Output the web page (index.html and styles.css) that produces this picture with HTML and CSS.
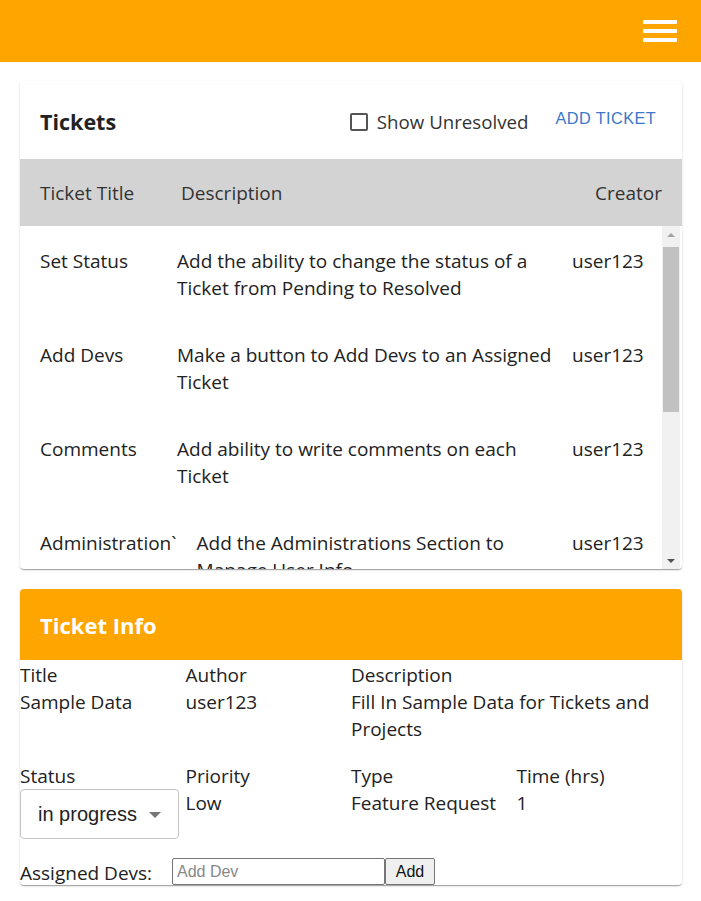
FILE: index.html
```html
<!DOCTYPE html>
<html>
<head>
<meta charset="utf-8">
<link rel="stylesheet" href="styles.css">
</head>
<body>
<header class="topbar">
  <div class="burger"><span></span><span></span><span></span></div>
</header>
<main class="page">
  <section class="card tickets">
    <div class="tickets-head">
      <h2 class="tickets-title">Tickets</h2>
      <label class="unresolved"><span class="box"></span>Show Unresolved</label>
      <button class="add-ticket">ADD TICKET</button>
    </div>
    <div class="thead">
      <div class="th-title">Ticket Title</div>
      <div class="th-desc">Description</div>
      <div class="th-creator">Creator</div>
    </div>
    <div class="tbody-wrap">
      <div class="tbody">
        <div class="row">
          <div class="c-title">Set Status</div>
          <div class="c-desc">Add the ability to change the status of a Ticket from Pending to Resolved</div>
          <div class="c-creator">user123</div>
        </div>
        <div class="row">
          <div class="c-title">Add Devs</div>
          <div class="c-desc">Make a button to Add Devs to an Assigned Ticket</div>
          <div class="c-creator">user123</div>
        </div>
        <div class="row">
          <div class="c-title">Comments</div>
          <div class="c-desc">Add ability to write comments on each Ticket</div>
          <div class="c-creator">user123</div>
        </div>
        <div class="row">
          <div class="c-title">Administration`</div>
          <div class="c-desc">Add the Administrations Section to Manage User Info</div>
          <div class="c-creator">user123</div>
        </div>
      </div>
      <div class="scrollbar">
        <div class="sb-btn"><span class="arr-up"></span></div>
        <div class="sb-track"><div class="sb-thumb"></div></div>
        <div class="sb-btn"><span class="arr-down"></span></div>
      </div>
    </div>
  </section>

  <section class="card info">
    <div class="info-head">Ticket Info</div>
    <div class="info-grid">
      <div class="cell"><div>Title</div><div>Sample Data</div></div>
      <div class="cell"><div>Author</div><div>user123</div></div>
      <div class="cell span2"><div>Description</div><div>Fill In Sample Data for Tickets and Projects</div></div>
      <div class="cell"><div>Status</div>
        <div class="select"><span>in progress</span><span class="caret"></span></div>
      </div>
      <div class="cell"><div>Priority</div><div>Low</div></div>
      <div class="cell"><div>Type</div><div>Feature Request</div></div>
      <div class="cell"><div>Time (hrs)</div><div>1</div></div>
    </div>
    <div class="devs">
      <span class="devs-label">Assigned Devs:</span>
      <input class="dev-input" type="text" placeholder="Add Dev">
      <button class="dev-add">Add</button>
    </div>
  </section>
</main>
</body>
</html>
```
FILE: styles.css
```css
* { box-sizing: border-box; }
html, body { margin: 0; padding: 0; }
body {
  font-family: "Open Sans", "Noto Sans", sans-serif;
  font-size: 19px;
  color: #222;
  background: #fff;
  width: 701px;
  height: 901px;
  overflow: hidden;
}
.topbar {
  height: 62px;
  background: #ffa500;
  display: flex;
  justify-content: flex-end;
  align-items: center;
  padding-right: 24px;
}
.burger {
  width: 34px;
  display: flex;
  flex-direction: column;
  gap: 5px;
}
.burger span {
  display: block;
  height: 4px;
  background: #fff;
  border-radius: 1px;
}
.page {
  padding: 19px 19px 0 20px;
  display: flex;
  flex-direction: column;
  gap: 20px;
}
.card {
  background: #fff;
  border-radius: 4px;
  box-shadow: 0 2px 1px -1px rgba(0,0,0,0.2), 0 1px 1px 0 rgba(0,0,0,0.14), 0 1px 3px 0 rgba(0,0,0,0.12);
  overflow: hidden;
}
.tickets-head {
  height: 78px;
  display: flex;
  align-items: center;
  padding: 3px 26px 0 20px;
}
.tickets-title {
  margin: 0;
  font-size: 21.5px;
  font-weight: 700;
  flex: 1;
}
.unresolved {
  display: flex;
  align-items: center;
  font-size: 18.7px;
  color: #333;
  margin-right: 27px;
}
.box {
  width: 18px;
  height: 18px;
  border: 2px solid #555;
  border-radius: 2px;
  margin-right: 9px;
}
.add-ticket {
  border: 0;
  background: none;
  padding: 0;
  font-family: "Liberation Sans", Arial, sans-serif;
  font-size: 16.3px;
  letter-spacing: 0.4px;
  color: #3b78c9;
  margin-top: -6px;
}
.thead {
  height: 67px;
  background: #d3d3d3;
  display: flex;
  align-items: center;
  padding: 0 20px;
  color: #333;
}
.th-title { width: 141px; }
.th-desc { flex: 1; }
.tbody-wrap {
  height: 343px;
  display: flex;
}
.tbody {
  flex: 1;
  overflow: hidden;
  padding: 22px 0 0 20px;
}
.row {
  display: flex;
  height: 94px;
  line-height: 27px;
}
.c-title { min-width: 117px; margin-right: 20px; white-space: nowrap; }
.c-desc { flex: 1; margin-right: 12px; }
.c-creator { width: 90px; }
.scrollbar {
  width: 18px;
  background: #f1f1f1;
  display: flex;
  flex-direction: column;
  padding: 0 1px;
  margin-right: 2px;
}
.sb-btn {
  height: 17px;
  display: flex;
  align-items: center;
  justify-content: center;
}
.arr-up {
  width: 0; height: 0;
  border-left: 4px solid transparent;
  border-right: 4px solid transparent;
  border-bottom: 4px solid #a3a3a3;
}
.arr-down {
  width: 0; height: 0;
  border-left: 4px solid transparent;
  border-right: 4px solid transparent;
  border-top: 4px solid #505050;
}
.sb-track { flex: 1; padding-top: 4px; }
.sb-thumb { height: 165px; background: #c1c1c1; }

.info-head {
  height: 71px;
  background: #ffa500;
  color: #fff;
  font-weight: 700;
  font-size: 22px;
  display: flex;
  align-items: center;
  padding-left: 20px;
}
.info-grid {
  display: grid;
  grid-template-columns: repeat(4, 1fr);
  row-gap: 20px;
  line-height: 27px;
  padding-top: 2px;
}
.span2 { grid-column: span 2; }
.select {
  margin-top: -1px;
  width: 159px;
  height: 50px;
  border: 1px solid #c4c4c4;
  border-radius: 4px;
  display: flex;
  align-items: center;
  padding-left: 17px;
  font-family: "Liberation Sans", Arial, sans-serif;
  font-size: 20px;
  color: #222;
}
.caret {
  margin-left: 12px;
  margin-top: 2px;
  width: 0; height: 0;
  border-left: 6px solid transparent;
  border-right: 6px solid transparent;
  border-top: 6px solid #777;
}
.devs {
  display: flex;
  align-items: flex-start;
  margin-top: 19px;
  height: 27px;
}
.devs-label { width: 152px; line-height: 24px; margin-top: 3px; }
.dev-input {
  width: 213px;
  height: 27px;
  border: 1px solid #767676;
  border-radius: 2px;
  padding: 0 4px;
  font-family: "Liberation Sans", Arial, sans-serif;
  font-size: 16px;
  margin: 0;
}
.dev-input::placeholder { color: #888; }
.dev-add {
  height: 27px;
  width: 50px;
  border: 1px solid #767676;
  border-radius: 2px;
  background: #efefef;
  font-family: "Liberation Sans", Arial, sans-serif;
  font-size: 16px;
  color: #111;
  margin: 0;
  padding: 0;
}
```
